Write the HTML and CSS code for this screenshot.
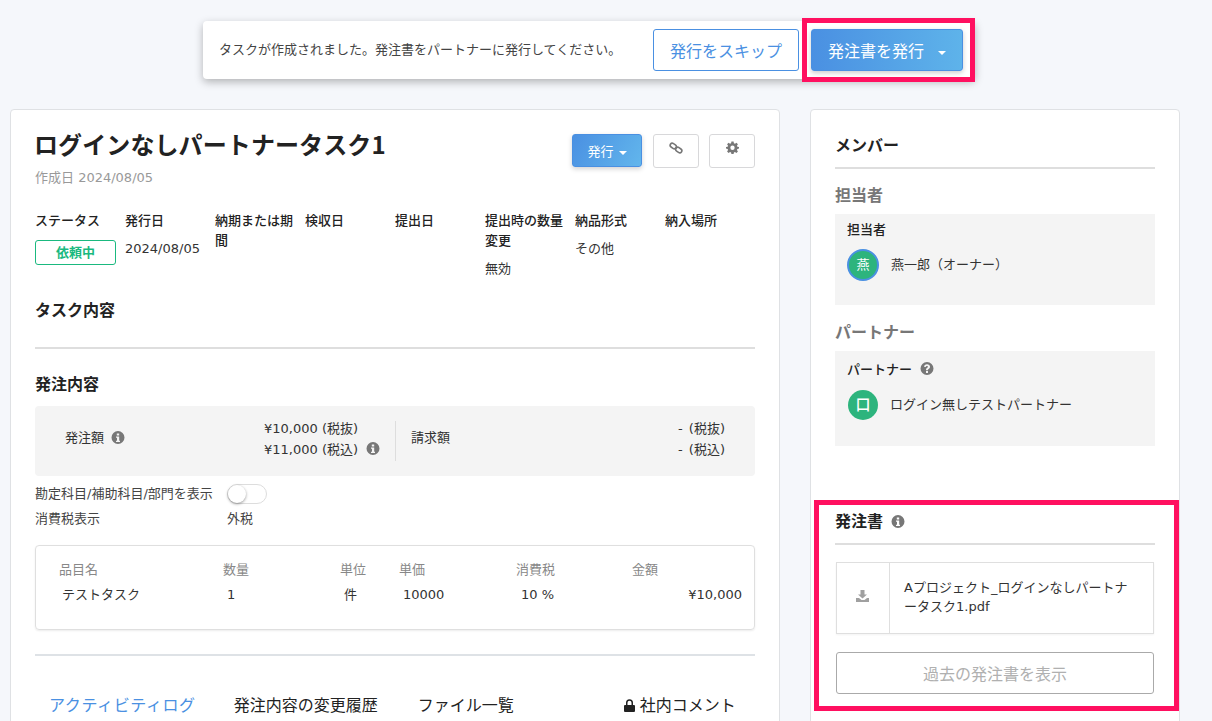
FILE: index.html
```html
<!DOCTYPE html>
<html lang="ja">
<head>
<meta charset="utf-8">
<title>タスク</title>
<link rel="stylesheet" href="styles.css">
</head>
<body>
<div class="page">
  <div class="notice-row">
    <div class="notice">
      <span class="notice-text">タスクが作成されました。発注書をパートナーに発行してください。</span>
      <button class="btn-skip">発行をスキップ</button>
      <button class="btn-issue">発注書を発行<span class="caret caret-big"></span></button>
      <div class="highlight highlight-issue"></div>
    </div>
  </div>
  <div class="columns">
    <main class="card main-card">
      <div class="title-row">
        <div>
          <h1>ログインなしパートナータスク1</h1>
          <div class="created">作成日 2024/08/05</div>
        </div>
        <div class="actions">
          <button class="btn-small-issue">発行<span class="caret"></span></button>
          <button class="btn-icon">
            <svg width="14" height="12" viewBox="0 0 14 12"><g fill="none" stroke="#777" stroke-width="1.6"><rect x="1" y="1.800" width="6.500" height="4.200" rx="2.100" transform="rotate(35 4.200 3.900)"/><rect x="6.500" y="6" width="6.500" height="4.200" rx="2.100" transform="rotate(35 9.800 8.100)"/></g></svg>
          </button>
          <button class="btn-icon">
            <svg width="13" height="13" viewBox="0 0 24 24"><path fill="#777" fill-rule="evenodd" d="M10 1h4l.6 3.100 2 .8L19.300 3.200 22 6l-1.800 2.600.8 2L24 11v3l-3 .6-.8 2L22 19.200 19.200 22l-2.600-1.800-2 .8L14 24h-4l-.6-3-2-.8L4.800 22 2 19.200l1.800-2.600-.8-2L0 14v-3l3-.4.800-2L2 6l2.800-2.800L7.400 4.900l2-.8zM12 8.500a4 4 0 1 0 0 8 4 4 0 0 0 0-8z"/></svg>
          </button>
        </div>
      </div>
      <div class="meta-grid">
        <div class="meta"><div class="meta-label">ステータス</div><div class="badge">依頼中</div></div>
        <div class="meta"><div class="meta-label">発行日</div><div class="meta-value">2024/08/05</div></div>
        <div class="meta"><div class="meta-label">納期または期間</div></div>
        <div class="meta"><div class="meta-label">検収日</div></div>
        <div class="meta"><div class="meta-label">提出日</div></div>
        <div class="meta"><div class="meta-label">提出時の数量変更</div><div class="meta-value">無効</div></div>
        <div class="meta"><div class="meta-label">納品形式</div><div class="meta-value">その他</div></div>
        <div class="meta"><div class="meta-label">納入場所</div></div>
      </div>
      <h2 class="section-task">タスク内容</h2>
      <hr class="rule rule-task">
      <h2 class="section-order">発注内容</h2>
      <div class="amount-box">
        <div class="amount-left">
          <span class="amount-label">発注額<svg class="info" viewBox="0 0 14 14"><use href="#i-info"/></svg></span>
          <div class="amount-values">
            <div>¥10,000 (税抜)</div>
            <div>¥11,000 (税込)<svg class="info" viewBox="0 0 14 14"><use href="#i-info"/></svg></div>
          </div>
        </div>
        <div class="amount-right">
          <span class="amount-label">請求額</span>
          <div class="amount-values right">
            <div>- (税抜)</div>
            <div>- (税込)</div>
          </div>
        </div>
      </div>
      <div class="opt-row opt-toggle"><span class="opt-label">勘定科目/補助科目/部門を表示</span><span class="toggle"><span class="knob"></span></span></div>
      <div class="opt-row opt-tax"><span class="opt-label">消費税表示</span><span>外税</span></div>
      <div class="items">
        <div class="items-row items-head">
          <span class="c-name">品目名</span><span class="c-qty">数量</span><span class="c-unit">単位</span><span class="c-price">単価</span><span class="c-tax">消費税</span><span class="c-amt">金額</span>
        </div>
        <div class="items-row items-body">
          <span class="c-name">テストタスク</span><span class="c-qty">1</span><span class="c-unit">件</span><span class="c-price">10000</span><span class="c-tax">10 %</span><span class="c-amt">¥10,000</span>
        </div>
      </div>
      <hr class="rule rule-items">
      <nav class="tabs">
        <a class="tab active">アクティビティログ</a>
        <a class="tab">発注内容の変更履歴</a>
        <a class="tab">ファイル一覧</a>
        <a class="tab tab-lock"><svg width="11" height="13" viewBox="0 0 11 13"><path fill="#222" d="M1 6h1V3.800a3.500 3.500 0 0 1 7 0V6h1a1 1 0 0 1 1 1v5a1 1 0 0 1-1 1H1a1 1 0 0 1-1-1V7a1 1 0 0 1 1-1zm2.500 0h4V3.800a2 2 0 0 0-4 0z"/></svg>社内コメント</a>
      </nav>
    </main>
    <aside class="card side-card">
      <h2 class="side-title">メンバー</h2>
      <hr class="rule rule-member">
      <h3 class="sub-title">担当者</h3>
      <div class="member-box box-owner">
        <div class="member-label">担当者</div>
        <div class="member">
          <span class="avatar avatar-ring">燕</span><span>燕一郎（オーナー）</span>
        </div>
      </div>
      <h3 class="sub-title sub-partner">パートナー</h3>
      <div class="member-box box-partner">
        <div class="member-label">パートナー<svg class="info" viewBox="0 0 14 14"><use href="#i-help"/></svg></div>
        <div class="member">
          <span class="avatar avatar-square">口</span><span>ログイン無しテストパートナー</span>
        </div>
      </div>
      <div class="doc-section">
        <h2 class="side-title">発注書<svg class="info" viewBox="0 0 14 14"><use href="#i-info"/></svg></h2>
        <hr class="rule rule-doc">
        <div class="file">
          <div class="file-icon">
            <svg width="13" height="12" viewBox="0 0 13 12"><path fill="#a0a0a0" d="M4.500 0h4v4.500H11L6.500 8.500 2 4.500h2.500zM0 8h3l2.500 2h3L11 8h2v4H0z"/></svg>
          </div>
          <div class="file-name">Aプロジェクト_ログインなしパートナータスク1.pdf</div>
        </div>
        <button class="btn-past">過去の発注書を表示</button>
        <div class="highlight highlight-doc"></div>
      </div>
    </aside>
  </div>
</div>
<svg class="defs" width="0" height="0">
  <symbol id="i-info" viewBox="0 0 14 14"><path fill="#777" fill-rule="evenodd" d="M7 0a6.500 6.500 0 1 1 0 13A6.500 6.500 0 0 1 7 0zM5.800 2.500v2h2.400v-2zM5 5.500v1.200h1v3H5v1.200h4V9.700H8.200V5.500z"/></symbol>
  <symbol id="i-help" viewBox="0 0 14 14"><path fill="#777" fill-rule="evenodd" d="M7 0a6.500 6.500 0 1 1 0 13A6.500 6.500 0 0 1 7 0zM6 9v2h2V9zM7 2.300C5.300 2.300 4.200 3.200 4 4.800l1.800.3c.1-.8.5-1.100 1.200-1.100.6 0 1 .3 1 .8 0 .4-.3.700-.8 1-.9.600-1.200 1.100-1.200 2.400h1.900c0-.7.100-.9.800-1.300.8-.5 1.300-1.200 1.300-2.200 0-1.500-1.200-2.400-3-2.400z"/></symbol>
</svg>
</body>
</html>
```
FILE: styles.css
```css
* { box-sizing: border-box; }
html, body { margin: 0; height: 721px; overflow: hidden; }
body {
  background: #f5f7fb;
  color: #222;
  font-family: "DejaVu Sans", "Noto Sans CJK JP", sans-serif;
  font-size: 13px;
  line-height: 1.5;
}
h1, h2, h3 { margin: 0; }
button { font-family: inherit; cursor: pointer; }
.defs { position: absolute; }
.page { padding: 21px 32px 0 10px; }
.notice-row { padding-left: 193px; height: 88px; }
.notice {
  position: relative;
  display: flex;
  align-items: center;
  width: 772px;
  height: 58px;
  padding-left: 16px;
  background: #fff;
  border-radius: 4px;
  box-shadow: 0 3px 8px rgba(0, 0, 0, .28);
}
.notice-text { width: 434px; font-size: 13px; color: #444; white-space: nowrap; }
.btn-skip {
  width: 146px;
  height: 42px;
  background: #fff;
  border: 1px solid #4a90e2;
  border-radius: 3px;
  color: #4a90e2;
  font-size: 16px;
}
.btn-issue {
  width: 152px;
  height: 42px;
  margin-left: 12px;
  background: linear-gradient(to right, #4a90e2, #5eb3ea);
  border: 1px solid #4a90e2;
  border-radius: 3px;
  color: #fff;
  font-size: 16px;
  box-shadow: 0 2px 5px rgba(0, 0, 0, .2);
}
.caret {
  display: inline-block;
  margin-left: 5px;
  vertical-align: middle;
  border-top: 4px solid #fff;
  border-left: 4px solid transparent;
  border-right: 4px solid transparent;
}
.caret-big { margin-left: 14px; border-width: 4px 4px 0; }
.highlight { position: absolute; border: 5px solid #ff1060; pointer-events: none; }
.highlight-issue { left: 599px; top: -3px; width: 173px; height: 64px; }
.highlight-doc { left: -21px; top: -10px; width: 365px; height: 211px; }

.columns { display: flex; gap: 30px; align-items: flex-start; }
.card {
  background: #fff;
  border: 1px solid #dfe1e4;
  border-radius: 4px;
  padding: 24px;
}
.main-card { width: 770px; height: 700px; }
.side-card { width: 370px; height: 700px; }
.title-row { display: flex; justify-content: space-between; height: 77px; }
h1 { font-size: 24px; font-family: "Noto Sans CJK JP", sans-serif; font-weight: 700; line-height: 24px; margin: -2px 0 0 -1px; letter-spacing: .1px; height: 30px; }
.created { margin-top: 6px; color: #999; font-size: 13px; line-height: 20px; }
.actions { display: flex; gap: 10px; }
.btn-small-issue {
  width: 70px;
  height: 33px;
  margin-right: 1px;
  background: linear-gradient(120deg, #4a90e2, #62b6ec);
  border: 1px solid #4a90e2;
  border-radius: 3px;
  color: #fff;
  font-size: 13px;
  box-shadow: 0 2px 5px rgba(0, 0, 0, .18);
}
.btn-icon {
  display: flex;
  align-items: center;
  justify-content: center;
  width: 46px;
  height: 34px;
  padding: 0 0 7px;
  background: #fff;
  border: 1px solid #d8d8da;
  border-radius: 3px;
}
.meta-grid { display: grid; grid-template-columns: repeat(8, 90px); height: 89px; }
.meta { padding-right: 7px; }
.meta-label { font-size: 13px; line-height: 20px; font-weight: 500; }
.meta-value { margin-top: 8px; font-size: 13px; line-height: 20px; color: #333; }
.badge {
  width: 81px;
  height: 25px;
  margin-top: 9px;
  border: 1px solid #1ab97f;
  border-radius: 3px;
  color: #1ab97f;
  font-size: 13px;
  font-weight: 700;
  line-height: 23px;
  text-align: center;
}
h2 { font-size: 16px; font-weight: 700; line-height: 22px; }
.rule { margin: 0; border: 0; height: 2px; background: #dedede; }
.rule-task { margin-top: 25px; }
.section-order { margin-top: 25px; }
.amount-box {
  display: flex;
  height: 70px;
  margin-top: 10px;
  background: #f4f4f4;
  border-radius: 4px;
  padding: 15px 0;
  font-size: 13px;
  color: #333;
}
.amount-left {
  display: flex;
  justify-content: space-between;
  width: 361px;
  height: 40px;
  padding: 0 15px 0 30px;
  border-right: 1px solid #ddd;
}
.amount-right {
  display: flex;
  justify-content: space-between;
  flex: 1;
  height: 40px;
  padding: 0 30px 0 15px;
}
.amount-label { display: flex; align-items: center; margin-bottom: 6px; }
.amount-label .info { margin-left: 7px; }
.amount-values { margin-top: -3px; line-height: 21px; width: 116px; white-space: nowrap; }
.amount-values.right { width: auto; text-align: right; word-spacing: 2px; }
.info { width: 14px; height: 14px; margin-left: 8px; vertical-align: -2px; }
.opt-row { display: flex; font-size: 13px; color: #444; }
.opt-label { width: 192px; white-space: nowrap; }
.opt-toggle { align-items: center; height: 34px; padding-top: 2px; }
.opt-tax { height: 18px; line-height: 18px; }
.toggle {
  display: block;
  position: relative;
  width: 40px;
  height: 20px;
  background: #fff;
  border: 1px solid #ddd;
  border-radius: 10px;
}
.knob {
  position: absolute;
  left: 0;
  top: 0;
  width: 18px;
  height: 18px;
  background: #fff;
  border-radius: 50%;
  box-shadow: 0 1px 3px rgba(0, 0, 0, .4);
}
.items {
  height: 85px;
  margin-top: 17px;
  padding: 14px 12px 0 23px;
  border: 1px solid #dfdfdf;
  border-radius: 4px;
  box-shadow: 0 1px 2px rgba(0, 0, 0, .08);
}
.items-row { display: flex; height: 25px; line-height: 20px; white-space: nowrap; }
.items-head { color: #888; }
.items-body { color: #333; }
.c-name { width: 164px; }
.c-qty { width: 117px; }
.c-unit { width: 59px; }
.c-price { width: 117px; }
.c-tax { width: 116px; }
.c-amt { flex: 1; }
.items-body .c-name { padding-left: 3px; }
.items-body .c-qty { padding-left: 4px; }
.items-body .c-unit { padding-left: 4px; }
.items-body .c-price { padding-left: 4px; }
.items-body .c-tax { padding-left: 5px; }
.items-body .c-amt { text-align: right; }
.rule-items { margin-top: 24px; background: #dee2e6; }
.tabs { display: flex; margin-top: 36px; padding-left: 14px; font-size: 16px; line-height: 24px; font-family: "Noto Sans CJK JP", sans-serif; white-space: nowrap; }
.tab { color: #222; margin-right: 40px; }
.tab.active { color: #4a90e2; letter-spacing: .6px; margin-right: 38px; }
.tab-lock { margin: 0 0 0 70px; }
.tab-lock svg { margin-right: 5px; vertical-align: -1px; }

.side-title { height: 22px; margin-top: 1px; }
.rule-member { margin-top: 10px; }
.sub-title { margin-top: 16px; color: #777; font-size: 16px; line-height: 22px; }
.sub-partner { margin-top: 17px; }
.member-box {
  margin-top: 7px;
  padding: 6px 12px;
  background: #f4f4f4;
  font-size: 13px;
  color: #333;
}
.box-owner { height: 91px; }
.box-owner .member { line-height: 32px; }
.box-partner { height: 95px; padding-top: 9px; }
.member-label { font-size: 13px; font-weight: 500; line-height: 20px; color: #222; }
.member { display: flex; align-items: flex-start; gap: 12px; margin-top: 9px; line-height: 30px; }
.box-partner .member { margin-top: 10px; }
.avatar {
  display: flex;
  align-items: center;
  justify-content: center;
  width: 30px;
  height: 30px;
  margin-left: 1px;
  background: #2db47d;
  border-radius: 50%;
  color: #fff;
  font-size: 14px;
}
.avatar-ring { width: 32px; height: 32px; margin-left: 0; border: 2px solid #4a90e2; font-size: 13px; }
.avatar-square { font-size: 15px; font-weight: 500; }
.doc-section { position: relative; margin-top: 64px; padding-top: 1px; }
.doc-section .side-title { display: flex; align-items: center; margin-top: 0; }
.doc-section .info { margin-left: 8px; }
.rule-doc { margin-top: 10px; }
.file {
  display: flex;
  width: 318px;
  height: 72px;
  margin: 17px 0 0 1px;
  border: 1px solid #dfdfdf;
  box-shadow: 0 1px 2px rgba(0, 0, 0, .05);
}
.file-icon {
  display: flex;
  align-items: center;
  justify-content: center;
  width: 53px;
  padding: 0 2px 4px 0;
  border-right: 1px solid #dfdfdf;
}
.file-name {
  flex: 1;
  padding: 15px 14px 0 14px;
  font-size: 13px;
  line-height: 19px;
  color: #333;
}
.btn-past {
  display: block;
  width: 318px;
  height: 42px;
  margin: 18px 0 0 1px;
  background: #fff;
  border: 1px solid #aaa;
  border-radius: 3px;
  color: #b0b0b0;
  font-size: 16px;
}
```
